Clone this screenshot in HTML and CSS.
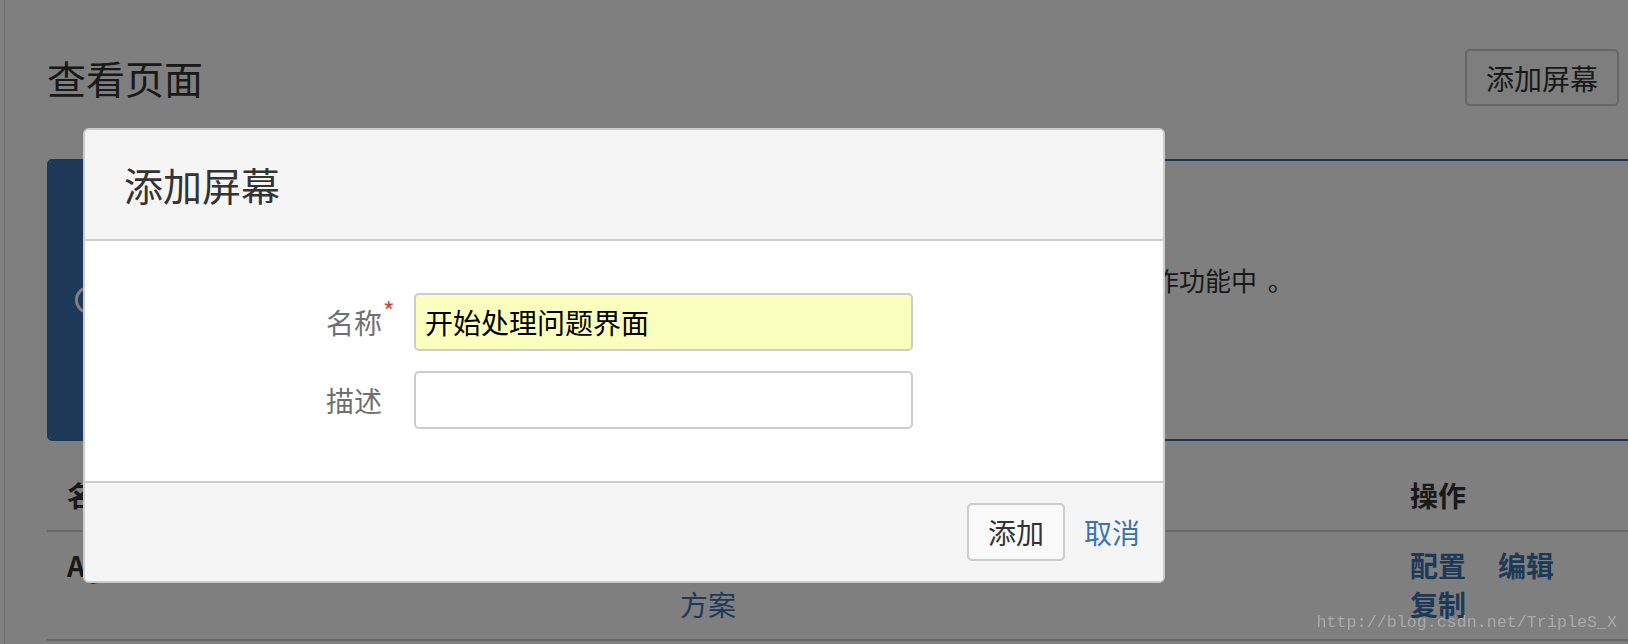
FILE: index.html
```html
<!DOCTYPE html>
<html lang="zh-CN">
<head>
  <meta charset="UTF-8">
  <title>查看页面</title>
  <link rel="stylesheet" href="styles.css">
</head>
<body>
  <div class="layout">
    <div class="sidebar"></div>
    <main class="content">
      <header class="page-header">
        <h1>查看页面</h1>
        <button class="aui-button">添加屏幕</button>
      </header>

      <div class="message">
        <div class="message-icon">
          <svg width="28" height="28" viewBox="0 0 28 28">
            <circle cx="14" cy="14" r="12.5" fill="none" stroke="#fff" stroke-width="3"/>
            <circle cx="14" cy="8.5" r="1.8" fill="#fff"/>
            <rect x="12.5" y="12" width="3" height="9" fill="#fff"/>
          </svg>
        </div>
        <div class="message-body">
          <p>屏幕是在创建、编辑或转换问题时显示字段排列。屏幕可以通过屏幕方案关联到问题操作功能中 。</p>
          <p>你可以在这里管理所有的屏幕。</p>
        </div>
      </div>

      <table class="screens">
        <colgroup>
          <col class="col-name">
          <col class="col-scheme">
          <col>
        </colgroup>
        <thead>
          <tr>
            <th>名称</th>
            <th>屏幕方案</th>
            <th class="ops">操作</th>
          </tr>
        </thead>
        <tbody>
          <tr>
            <td class="name">Agile Simplified 屏幕</td>
            <td><a class="scheme" href="#">敏捷项目默认问题屏幕与转换屏幕方案</a></td>
            <td class="ops">
              <div class="op-links">
                <a href="#">配置</a>
                <a href="#">编辑</a>
                <a href="#">复制</a>
              </div>
            </td>
          </tr>
        </tbody>
      </table>
    </main>
  </div>

  <div class="blanket"></div>

  <section class="dialog">
    <div class="dialog-header">
      <h2>添加屏幕</h2>
    </div>
    <form class="dialog-body" onsubmit="return false">
      <label class="field-label" for="screen-name"><span class="label-text">名称<span class="required">*</span></span></label>
      <input class="text autofilled" type="text" id="screen-name" value="开始处理问题界面">
      <label class="field-label" for="screen-desc"><span class="label-text">描述</span></label>
      <input class="text" type="text" id="screen-desc">
    </form>
    <div class="dialog-footer">
      <button class="aui-button">添加</button>
      <a class="cancel" href="#">取消</a>
    </div>
  </section>

  <div class="watermark">http://blog.csdn.net/TripleS_X</div>
</body>
</html>
```

FILE: styles.css
```css
body {
  margin: 0;
  font-family: "Noto Sans CJK SC", "Liberation Sans", sans-serif;
  color: #333;
  background: #fff;
  overflow: hidden;
}
a {
  color: #3b73af;
  text-decoration: none;
}
.layout {
  display: flex;
  min-height: 100vh;
}
.sidebar {
  width: 4px;
  flex-shrink: 0;
  border-right: 1px solid #ddd;
}
.content {
  flex: 1;
  min-width: 0;
  padding: 49px 9px 0 42px;
}
.page-header {
  display: flex;
  justify-content: space-between;
  align-items: center;
  height: 57px;
}
.page-header h1 {
  margin: 0;
  font-size: 39px;
  font-weight: normal;
  line-height: 57px;
}
.aui-button {
  font-family: inherit;
  font-size: 28px;
  color: #333;
  height: 58px;
  padding: 0 19px;
  border: 2px solid #ccc;
  border-radius: 5px;
  background: #fafafa;
}
.page-header .aui-button {
  height: 57px;
  background: #fcfcfc;
}

.message {
  display: flex;
  margin: 53px -40px 0 0;
  border: 2px solid #3b73af;
  border-radius: 5px;
  overflow: hidden;
}
.message-icon {
  width: 80px;
  flex-shrink: 0;
  background: #3b73af;
  display: flex;
  justify-content: center;
  align-items: center;
}
.message-body {
  padding: 99px 36px;
  font-size: 26px;
  line-height: 40px;
  word-spacing: 5px;
  white-space: nowrap;
}
.message-body p {
  margin: 0;
}

.screens {
  width: calc(100% + 40px);
  margin-top: 20px;
  border-collapse: collapse;
  table-layout: fixed;
  font-size: 28px;
  line-height: 39px;
}
.col-name {
  width: 613px;
}
.col-scheme {
  width: 730px;
}
.screens th,
.screens td {
  padding: 15px 20px;
  text-align: left;
  vertical-align: top;
  border-bottom: 2px solid #ccc;
}
.screens td {
  padding: 14px 20px 15px;
}
.screens .ops {
  padding-right: 40px;
}
.screens td.name {
  font-weight: bold;
  white-space: nowrap;
}
.scheme {
  display: inline-block;
  max-width: 440px;
}
.op-links {
  display: flex;
  flex-wrap: wrap;
  column-gap: 32px;
}
.op-links a {
  font-weight: bold;
}

.blanket {
  position: fixed;
  inset: 0;
  background: rgba(0, 0, 0, 0.5);
  z-index: 2;
}

.dialog {
  position: fixed;
  left: 83px;
  top: 128px;
  width: 1082px;
  box-sizing: border-box;
  border: 2px solid #ccc;
  border-radius: 6px;
  background: #fff;
  overflow: hidden;
  z-index: 3;
}
.dialog-header {
  background: #f5f5f5;
  border-bottom: 2px solid #ccc;
  padding: 31px 39px;
}
.dialog-header h2 {
  margin: 0;
  font-size: 39px;
  font-weight: normal;
  line-height: 47px;
}
.dialog-body {
  display: grid;
  grid-template-columns: 297px 499px;
  column-gap: 32px;
  row-gap: 20px;
  align-items: center;
  margin: 0;
  padding: 52px 0;
}
.field-label {
  text-align: right;
  font-size: 28px;
  line-height: 39px;
  color: #707070;
}
.label-text {
  position: relative;
}
.required {
  position: absolute;
  left: 100%;
  top: -4px;
  margin-left: 1px;
  font-size: 25px;
  line-height: 1;
  color: #d04437;
}
.text {
  width: 499px;
  height: 58px;
  box-sizing: border-box;
  border: 2px solid #ccc;
  border-radius: 5px;
  padding: 0 9px;
  font-family: inherit;
  font-size: 28px;
  color: #000;
  background: #fff;
}
.text.autofilled {
  background: #faffbd;
}
.dialog-footer {
  display: flex;
  justify-content: flex-end;
  align-items: center;
  gap: 19px;
  padding: 20px 23px;
  background: #f5f5f5;
  border-top: 2px solid #ccc;
}
.cancel {
  font-size: 28px;
  line-height: 39px;
}

.watermark {
  position: fixed;
  right: 11px;
  bottom: 11px;
  font-family: "Liberation Mono", monospace;
  font-size: 16.7px;
  line-height: 20px;
  color: #aaa;
  z-index: 4;
}
```
